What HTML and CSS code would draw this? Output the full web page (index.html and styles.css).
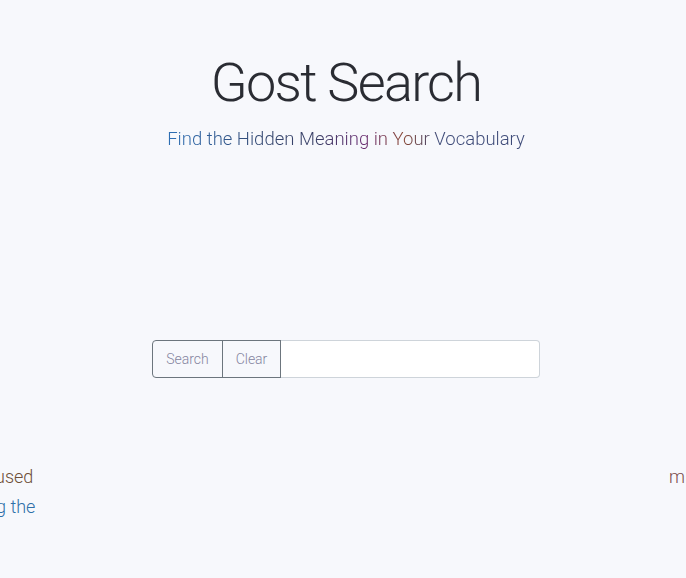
FILE: index.html
```html
<!DOCTYPE html>
<html>
<head>
<meta charset="utf-8">
<link rel="stylesheet" href="styles.css">
</head>
<body>
<div class="page">
  <header class="hero">
    <h1 class="title">Gost Search</h1>
    <p class="subtitle">Find the Hidden Meaning in Your Vocabulary</p>
  </header>
  <div class="search-group">
    <button class="btn">Search</button>
    <button class="btn btn-clear">Clear</button>
    <input class="search-input" type="text">
  </div>
  <div class="ghost">
    <div class="ghost-row">
      <span class="g-brown">used</span>
      <span class="g-mix">m</span>
    </div>
    <div class="ghost-row">
      <span class="g-blue">g the</span>
    </div>
  </div>
</div>
</body>
</html>
```
FILE: styles.css
```css
html, body {
  margin: 0;
  padding: 0;
  background: #f7f8fc;
  overflow: hidden;
}
.page {
  width: 686px;
  height: 578px;
  display: flex;
  flex-direction: column;
  align-items: center;
  font-family: Roboto, "Liberation Sans", sans-serif;
}
.hero {
  display: flex;
  flex-direction: column;
  align-items: center;
  padding-top: 51px;
  padding-left: 6px;
}
.title {
  margin: 0;
  font-weight: 300;
  font-size: 54px;
  line-height: 64px;
  color: #2a2c33;
  letter-spacing: -1.7px;
}
.subtitle {
  margin: 12px 0 0 0;
  font-size: 18.5px;
  line-height: 24px;
  font-weight: 300;
  background: linear-gradient(90deg, #2d6fb5 0%, #34466e 28%, #3a3f66 42%, #6a2d72 55%, #874634 66%, #3d4a78 76%, #3d4a78 100%);
  -webkit-background-clip: text;
  background-clip: text;
  color: transparent;
}
.search-group {
  margin-top: 189px;
  margin-left: 6px;
  display: flex;
  width: 388px;
  height: 38px;
}
.btn {
  font-family: inherit;
  font-size: 14px;
  font-weight: 300;
  color: #85859f;
  background: #f7f8fc;
  border: 1px solid #6c757d;
  margin: 0;
  padding: 0;
  width: 71px;
  height: 38px;
}
.btn:first-child {
  border-radius: 4px 0 0 4px;
}
.btn-clear {
  width: 59px;
  margin-left: -1px;
}
.search-input {
  flex: 1;
  height: 38px;
  box-sizing: border-box;
  border: 1px solid #ced4da;
  border-left: none;
  border-radius: 0 4px 4px 0;
  background: #fff;
  margin: 0;
}
.ghost {
  margin-top: 84px;
  width: 686px;
  font-size: 18px;
  font-weight: 300;
  line-height: 30px;
}
.ghost-row {
  display: flex;
  justify-content: space-between;
  height: 30px;
  overflow: hidden;
}
.g-brown {
  margin-left: -5px;
  color: #6e4f38;
}
.g-blue {
  margin-left: -4px;
  color: #2f6fa8;
}
.g-mix {
  margin-right: -10px;
  width: 27px;
  overflow: hidden;
  color: #7a4a4a;
}
```
